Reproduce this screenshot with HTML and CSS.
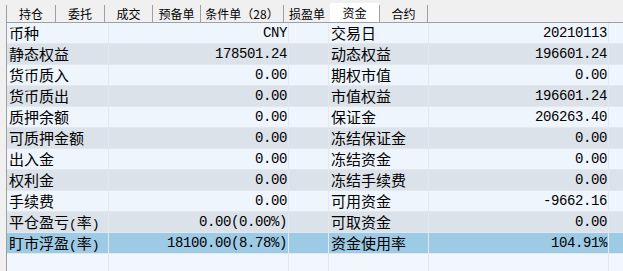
FILE: index.html
```html
<!DOCTYPE html>
<html lang="zh">
<head>
<meta charset="utf-8">
<link rel="stylesheet" href="styles.css">
</head>
<body>
<div class="tabs">
  <div class="tab w49">持仓</div>
  <div class="tab w49">委托</div>
  <div class="tab w48">成交</div>
  <div class="tab w48">预备单</div>
  <div class="tab w83">条件单（28）</div>
  <div class="tab w47">损盈单</div>
  <div class="tab active">资金</div>
  <div class="tab w49 last">合约</div>
</div>
<div class="panel">
  <div class="row"><div class="lbl">币种</div><div class="val">CNY</div><div class="sp"></div><div class="lbl">交易日</div><div class="val">20210113</div><div class="sp"></div></div>
  <div class="row alt"><div class="lbl">静态权益</div><div class="val">178501.24</div><div class="sp"></div><div class="lbl">动态权益</div><div class="val">196601.24</div><div class="sp"></div></div>
  <div class="row"><div class="lbl">货币质入</div><div class="val">0.00</div><div class="sp"></div><div class="lbl">期权市值</div><div class="val">0.00</div><div class="sp"></div></div>
  <div class="row alt"><div class="lbl">货币质出</div><div class="val">0.00</div><div class="sp"></div><div class="lbl">市值权益</div><div class="val">196601.24</div><div class="sp"></div></div>
  <div class="row"><div class="lbl">质押余额</div><div class="val">0.00</div><div class="sp"></div><div class="lbl">保证金</div><div class="val">206263.40</div><div class="sp"></div></div>
  <div class="row alt"><div class="lbl">可质押金额</div><div class="val">0.00</div><div class="sp"></div><div class="lbl">冻结保证金</div><div class="val">0.00</div><div class="sp"></div></div>
  <div class="row"><div class="lbl">出入金</div><div class="val">0.00</div><div class="sp"></div><div class="lbl">冻结资金</div><div class="val">0.00</div><div class="sp"></div></div>
  <div class="row alt"><div class="lbl">权利金</div><div class="val">0.00</div><div class="sp"></div><div class="lbl">冻结手续费</div><div class="val">0.00</div><div class="sp"></div></div>
  <div class="row"><div class="lbl">手续费</div><div class="val">0.00</div><div class="sp"></div><div class="lbl">可用资金</div><div class="val">-9662.16</div><div class="sp"></div></div>
  <div class="row alt"><div class="lbl">平仓盈亏<span class="par">(</span>率<span class="par">)</span></div><div class="val">0.00(0.00%)</div><div class="sp"></div><div class="lbl">可取资金</div><div class="val">0.00</div><div class="sp"></div></div>
  <div class="row sel"><div class="lbl">盯市浮盈<span class="par">(</span>率<span class="par">)</span></div><div class="val">18100.00(8.78%)</div><div class="sp"></div><div class="lbl">资金使用率</div><div class="val">104.91%</div><div class="sp"></div></div>
  <div class="row fill"><div></div><div></div><div></div><div></div><div></div><div></div></div>
</div>
</body>
</html>
```

FILE: styles.css
```css
html, body {
  margin: 0;
  padding: 0;
  height: 271px;
  overflow: hidden;
  background: #f0f0f0;
  font-family: "Noto Sans CJK SC", sans-serif;
  color: #000;
}

.tabs {
  display: flex;
  align-items: flex-end;
  height: 22px;
  padding-left: 6px;
  box-sizing: border-box;
}

.tab {
  height: 17px;
  line-height: 17px;
  font-size: 12px;
  text-align: center;
  border-left: 1px solid #a0a0a0;
  box-sizing: border-box;
  white-space: nowrap;
}

.w47 { width: 47px; }
.w48 { width: 48px; }
.w49 { width: 49px; }
.w83 { width: 83px; }

.tab.active {
  width: 49px;
  height: 19px;
  line-height: 20px;
  background: #ffffff;
  border-left: none;
}

.tab.last {
  border-right: 1px solid #a0a0a0;
}

.panel {
  display: flex;
  flex-direction: column;
  gap: 1px;
  height: 249px;
  box-sizing: border-box;
  margin-left: 6px;
  border-top: 1px solid #a0a0a0;
  border-left: 1px solid #a0a0a0;
  background: #e4e7eb;
}

.row {
  display: grid;
  grid-template-columns: 101px 179px 39px 99px 179px 1fr;
  gap: 1px;
  height: 20px;
  flex: none;
}

.row > div {
  background: #eff5fc;
  line-height: 20px;
  height: 20px;
  white-space: nowrap;
  overflow: hidden;
}

.row.alt > div {
  background: #dce2e9;
}

.row.sel > div {
  background: #9dcbe6;
}

.row.fill {
  flex: 1;
  height: auto;
}

.row.fill > div {
  background: #f2f7fd;
  height: auto;
}

.lbl {
  font-size: 15px;
  padding-left: 2px;
}

.lbl .par {
  font-family: "Liberation Mono", monospace;
  font-size: 13px;
}

.val {
  font-family: "Liberation Mono", monospace;
  font-size: 14px;
  letter-spacing: -0.4px;
  text-align: right;
  padding-right: 1px;
}
```
